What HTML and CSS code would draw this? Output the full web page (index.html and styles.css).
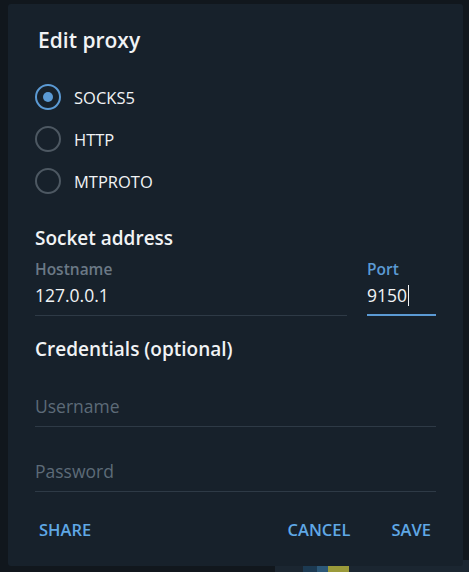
FILE: index.html
```html
<!DOCTYPE html>
<html>
<head>
<meta charset="utf-8">
<link rel="stylesheet" href="styles.css">
</head>
<body>
<div class="backdrop">
  <div class="dialog">
    <h1 class="title">Edit proxy</h1>
    <div class="radios">
      <div class="radio checked"><span class="circle"></span><span class="rlabel">SOCKS5</span></div>
      <div class="radio"><span class="circle"></span><span class="rlabel">HTTP</span></div>
      <div class="radio"><span class="circle"></span><span class="rlabel">MTPROTO</span></div>
    </div>
    <h2 class="section">Socket address</h2>
    <div class="row">
      <div class="field host">
        <div class="flabel">Hostname</div>
        <div class="fvalue">127.0.0.1</div>
      </div>
      <div class="field port active">
        <div class="flabel">Port</div>
        <div class="fvalue">9150<span class="caret"></span></div>
      </div>
    </div>
    <h2 class="section cred">Credentials (optional)</h2>
    <div class="field ph"><div class="fvalue placeholder">Username</div></div>
    <div class="field ph"><div class="fvalue placeholder">Password</div></div>
    <div class="buttons">
      <span class="btn share">SHARE</span>
      <span class="spacer"></span>
      <span class="btn">CANCEL</span>
      <span class="btn save">SAVE</span>
    </div>
  </div>
  <div class="under">
    <span class="thumb"></span>
  </div>
</div>
</body>
</html>
```
FILE: styles.css
```css
* { box-sizing: border-box; }
html, body { margin: 0; padding: 0; }
body {
  width: 469px;
  height: 572px;
  background: #11171d;
  font-family: "Open Sans", "Noto Sans", sans-serif;
  overflow: hidden;
}
.backdrop {
  position: relative;
  padding: 4px 6px 0 8px;
}
.dialog {
  position: relative;
  z-index: 1;
  width: 455px;
  height: 562px;
  background: #17212b;
  border-radius: 3px;
  padding: 0 27px;
  display: flex;
  flex-direction: column;
}
.under {
  position: absolute;
  left: 275px;
  top: 560px;
  width: 194px;
  height: 12px;
  background: #1b2631;
}
.thumb {
  position: absolute;
  left: 28px;
  top: 6px;
  width: 46px;
  height: 6px;
  background: linear-gradient(90deg, #1c3a52 0 30%, #2c5878 30% 55%, #9a9a3a 55% 100%);
}
.title {
  margin: 22px 0 0 3px;
  font-size: 21px;
  font-weight: 600;
  color: #f1f3f5;
  line-height: 28px;
}
.radios {
  margin-top: 30px;
  display: flex;
  flex-direction: column;
  gap: 16px;
}
.radio {
  display: flex;
  align-items: center;
  height: 26px;
}
.circle {
  width: 26px;
  height: 26px;
  border-radius: 50%;
  border: 2px solid #4d5862;
  display: flex;
  align-items: center;
  justify-content: center;
}
.radio.checked .circle { border-color: #5b9ad4; }
.radio.checked .circle::after {
  content: "";
  width: 10px;
  height: 10px;
  border-radius: 50%;
  background: #5b9ad4;
}
.rlabel {
  margin-left: 13px;
  font-size: 16.5px;
  color: #f1f3f5;
}
.section {
  margin: 31px 0 0 0;
  font-size: 19px;
  font-weight: 600;
  color: #f1f3f5;
  line-height: 26px;
}
.row {
  display: flex;
  gap: 20px;
}
.field {
  border-bottom: 1px solid #2e3a46;
}
.host { flex: 1; }
.port { width: 69px; border-bottom: 2px solid #5b9ad4; }
.port .fvalue { padding-bottom: 7px; }
.flabel {
  margin-top: 8px;
  font-size: 15.5px;
  font-weight: 600;
  color: #6b7986;
  line-height: 20px;
}
.port .flabel { color: #5b9ad4; }
.fvalue {
  margin-top: 4px;
  font-size: 17.5px;
  color: #f1f3f5;
  line-height: 24px;
  padding-bottom: 8px;
  display: flex;
  align-items: center;
}
.caret {
  display: inline-block;
  width: 1px;
  height: 21px;
  background: #f1f3f5;
  margin-left: 1px;
}
.cred { margin-top: 20px; }
.ph { margin-top: 28px; }
.placeholder { color: #5d6b78; }
.buttons {
  margin-top: 28px;
  display: flex;
  align-items: center;
  gap: 41px;
  padding: 0 5px 0 4px;
}
.spacer { flex: 1; margin-left: -41px; }
.btn {
  font-size: 16.5px;
  font-weight: 600;
  color: #5fa8e6;
  line-height: 20px;
}
```
